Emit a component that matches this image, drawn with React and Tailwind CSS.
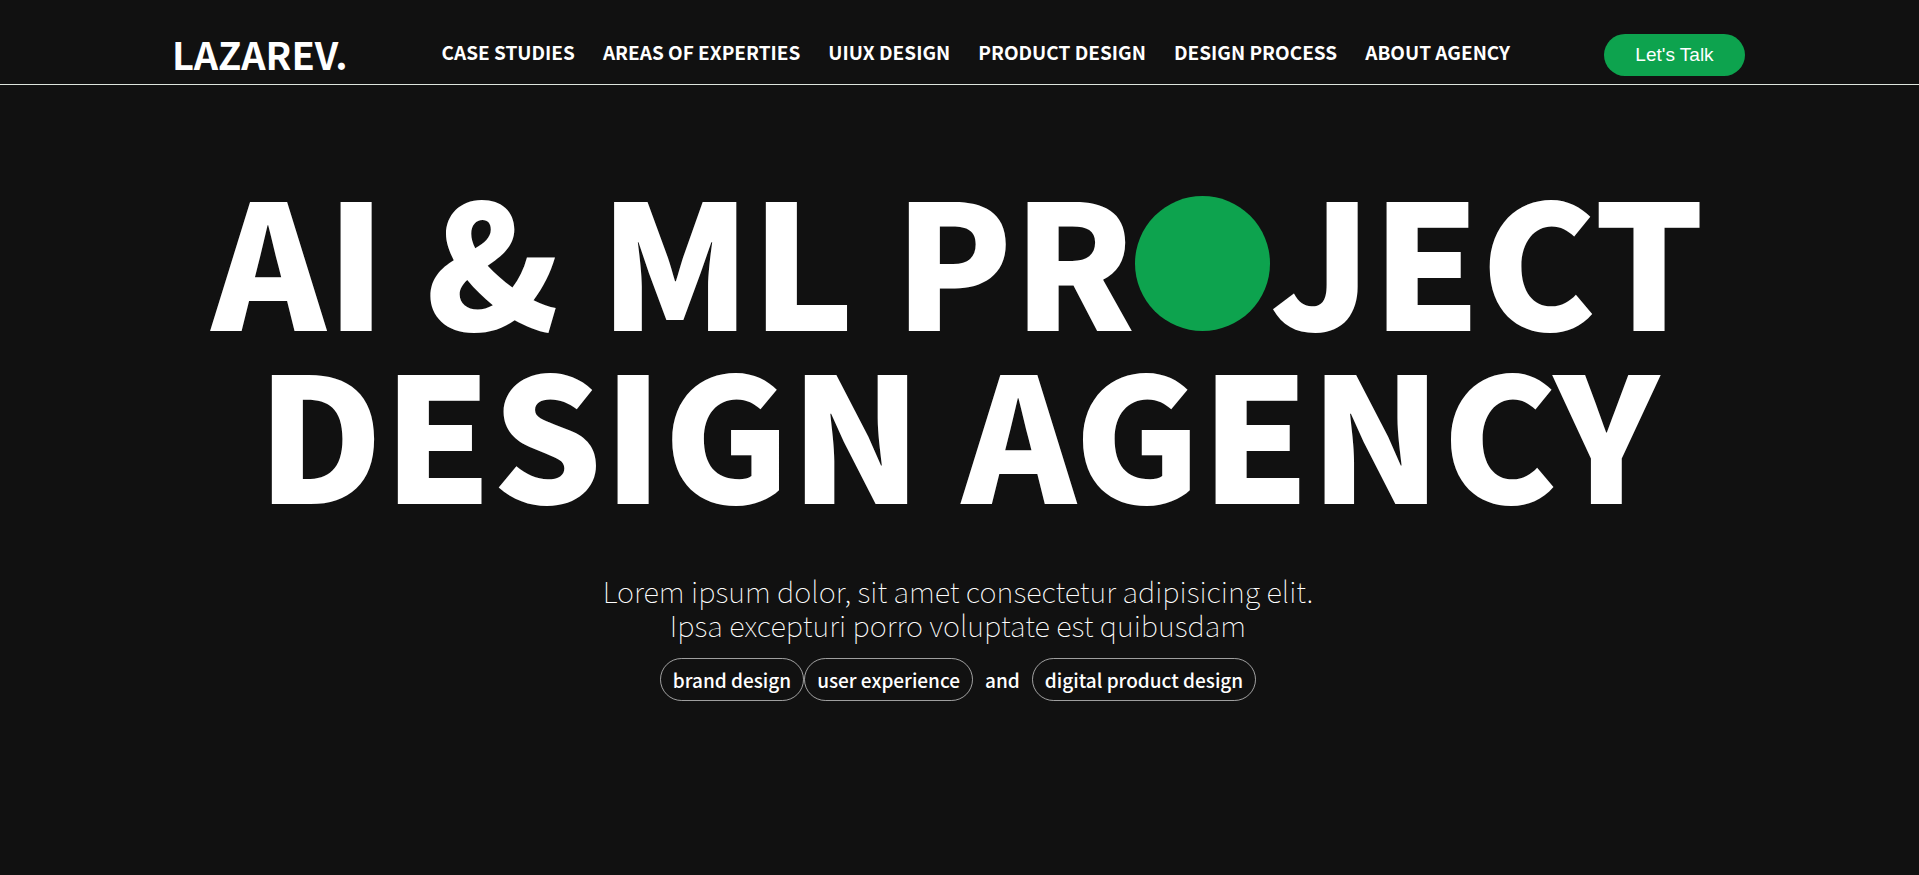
const links = ['CASE STUDIES', 'AREAS OF EXPERTIES', 'UIUX DESIGN', 'PRODUCT DESIGN', 'DESIGN PROCESS', 'ABOUT AGENCY']

function Pill({ children }) {
  return <a href="#" className="rounded-full border border-white/60 px-3 py-1.5">{children}</a>
}

export default function App() {
  return (
    <div className="min-h-screen bg-[#111] font-['Noto_Sans_CJK_SC',sans-serif] text-white">
      <header className="flex h-[85px] items-end justify-between border-b border-[#dde5dd] pr-[174px] pl-[172px] pb-[7px]">
        <a href="#" className="text-[38px] leading-[46px] font-bold">LAZAREV.</a>
        <nav className="flex gap-7 pb-[11px] text-[19px] leading-7 font-bold">
          {links.map((l) => <a key={l} href="#">{l}</a>)}
        </nav>
        <button className="mb-px h-[42px] w-[141px] rounded-full bg-[#0da34e] font-['Liberation_Sans',sans-serif] text-[19px]">Let's Talk</button>
      </header>
      <main className="flex flex-col items-center pt-[84px] pr-[3px] text-center">
        <h1 className="text-[173px] leading-[173px] font-black">
          <span className="block">AI &amp; ML PR<span role="img" aria-label="O" className="inline-block size-[135px] rounded-full bg-[#0da34e]" />JECT</span>
          <span className="block">DESIGN AGENCY</span>
        </h1>
        <p className="mt-[58px] text-[29px] leading-[34px] font-thin">Lorem ipsum dolor, sit amet consectetur adipisicing elit.<br />Ipsa excepturi porro voluptate est quibusdam</p>
        <div className="mt-[17px] flex items-center text-[19px] leading-[29px] font-medium">
          <Pill>brand design</Pill><Pill>user experience</Pill><span className="px-3">and</span><Pill>digital product design</Pill>
        </div>
      </main>
    </div>
  )
}
